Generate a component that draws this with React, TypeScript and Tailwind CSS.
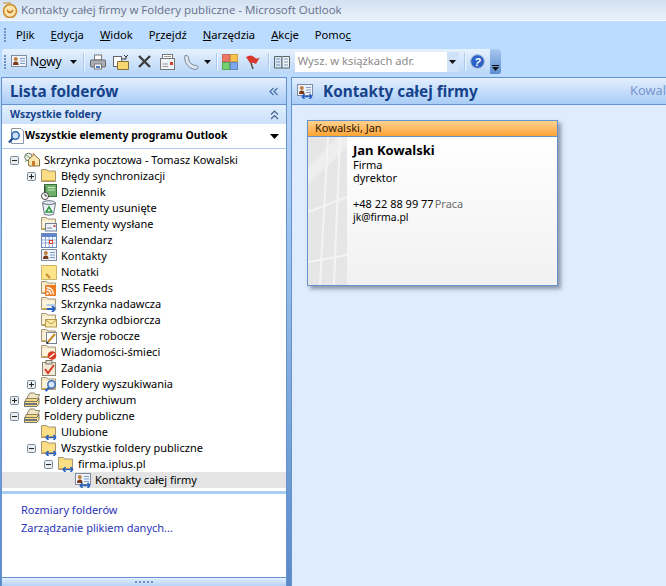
import React from "react";

const F = ({ children, badge }: { children?: React.ReactNode; badge?: boolean }) => (
  <svg width="16" height="16" viewBox="0 0 16 16" className="block shrink-0">
    <path d="M0.5 13.5V1.5H5.5L7 3H14.5V13.5Z" fill={badge ? "#f3e6c4" : "#f7d978"} stroke="#a5977a" />
    <path d="M1.5 4.5H13.5V12.5H1.5Z" fill={badge ? "#fbf3dc" : "#fbdf86"} />
    <path d="M1.5 12.5H13.5" stroke="#d9a83c" />
    {children}
  </svg>
);
const Arrows = () => (
  <path d="M5 13.5H15M5 13.5L7.5 11M5 13.5L7.5 16M15 13.5L12.5 11M15 13.5L12.5 16" stroke="#2a62c0" strokeWidth="1.6" fill="none" />
);
const Contact = ({ arrows }: { arrows?: boolean }) => (
  <svg width="16" height="16" viewBox="0 0 16 16" className="block shrink-0">
    <rect x="0.5" y="1.5" width="15" height="11" fill="#eef3fa" stroke="#7d8ba3" />
    <circle cx="4.8" cy="5" r="2" fill="#c08040" />
    <path d="M2 11C2 8 3.5 7.5 4.8 7.5S7.5 8 7.5 11Z" fill="#7a3a1a" />
    <path d="M9 4.5H14M9 7H14M9 9.5H14" stroke="#7f9cc8" />
    {arrows && <Arrows />}
  </svg>
);
const Store = () => (
  <svg width="16" height="16" viewBox="0 0 16 16" className="block shrink-0">
    <path d="M4 3.5L6 1H10.5L11.5 2.5H15.5L14 7H3Z" fill="#f1e4bf" stroke="#8a8570" />
    <path d="M2 6.5H14.5L13 10.5H1Z" fill="#f5d97c" stroke="#8a8570" />
    <path d="M0.5 9.5H13L15 6.5V11.5L13 14.5H0.5Z" fill="#f8dd82" stroke="#77756a" />
    <path d="M1 12H13" stroke="#6d7380" strokeWidth="2" />
  </svg>
);

const Ico = ({ k }: { k: string }) => {
  switch (k) {
    case "home":
      return (
        <svg width="16" height="16" viewBox="0 0 16 16" className="block shrink-0">
          <circle cx="4.5" cy="5" r="3.8" fill="#f0f0e8" stroke="#6f7a6a" />
          <path d="M2 3L6 6M3 8L1 10" stroke="#5d9a4c" />
          <path d="M4.5 12V7.5L10 2.5L15.5 7.5V14H5Z" fill="#fbe8b0" stroke="#85703d" />
          <path d="M9 2.5L10 1.5" stroke="#d07030" strokeWidth="2" />
          <rect x="8" y="9" width="3" height="5" fill="#c87b2a" />
        </svg>
      );
    case "folder":
      return <F />;
    case "journal":
      return (
        <svg width="16" height="16" viewBox="0 0 16 16" className="block shrink-0">
          <rect x="3.5" y="0.5" width="12" height="12" fill="#6fb06a" stroke="#3c6e3c" />
          <path d="M7 3.5H14M7 6H14" stroke="#cfe8c8" />
          <path d="M4 2V9" stroke="#203020" />
          <circle cx="4" cy="12" r="3.5" fill="#fff" stroke="#444" />
          <path d="M4 10V12H6" stroke="#333" fill="none" />
        </svg>
      );
    case "trash":
      return (
        <svg width="16" height="16" viewBox="0 0 16 16" className="block shrink-0">
          <ellipse cx="8" cy="3" rx="6.5" ry="2.3" fill="#dfe6ec" stroke="#6a7885" />
          <path d="M1.5 3.5L3.5 14.5Q8 16 12.5 14.5L14.5 3.5Q8 6 1.5 3.5Z" fill="#eef2f6" stroke="#6a7885" />
          <path d="M8 7L11 12H5Z" fill="none" stroke="#2d9a3c" strokeWidth="1.5" />
        </svg>
      );
    case "sent":
      return (
        <F badge>
          <rect x="4.5" y="7.5" width="11" height="7.5" fill="#eef3fa" stroke="#6f7f98" />
          <path d="M6 12H11" stroke="#6f7f98" />
          <rect x="12.5" y="9" width="2" height="2" fill="#d05030" />
        </F>
      );
    case "cal":
      return (
        <svg width="16" height="16" viewBox="0 0 16 16" className="block shrink-0">
          <rect x="0.5" y="1.5" width="15" height="14" fill="#fff" stroke="#6d87b5" />
          <rect x="1" y="2" width="14" height="3" fill="#5f86cc" />
          <path d="M1 8H15M1 11H15M4.5 5V15M8 5V15M11.5 5V15" stroke="#8da8d8" />
          <rect x="8.5" y="8.5" width="3" height="3" fill="#fff" stroke="#d8402a" />
        </svg>
      );
    case "contact":
      return <Contact />;
    case "note":
      return (
        <svg width="16" height="16" viewBox="0 0 16 16" className="block shrink-0">
          <path d="M0.5 1.5H15.5V15.5H0.5Z" fill="#fbe48a" stroke="#c9b468" />
          <path d="M5 10L9 14" stroke="#c88a30" strokeWidth="2" />
        </svg>
      );
    case "rss":
      return (
        <F badge>
          <rect x="4" y="5" width="11" height="11" rx="1" fill="#ee7a22" />
          <circle cx="6.5" cy="13.5" r="1.2" fill="#fff" />
          <path d="M5.5 10Q9.5 10 10 14.5M5.5 7.5Q12 7.5 12.5 14.5" stroke="#fff" strokeWidth="1.3" fill="none" />
        </F>
      );
    case "out":
      return (
        <F badge>
          <path d="M6 13H14M14 13L11 10M14 13L11 16" stroke="#2a62c0" strokeWidth="2" fill="none" />
          <rect x="5.5" y="8" width="9" height="2" fill="#b8cdea" />
        </F>
      );
    case "in":
      return (
        <F badge>
          <rect x="4.5" y="7.5" width="11" height="7.5" fill="#fbe9a8" stroke="#b39a50" />
          <path d="M4.5 8L10 12L15.5 8" stroke="#b39a50" fill="none" />
        </F>
      );
    case "draft":
      return (
        <F badge>
          <rect x="5.5" y="4.5" width="10" height="11" fill="#fff" stroke="#7a8596" />
          <path d="M7 14L14 6" stroke="#c58a2a" strokeWidth="2" />
          <path d="M7 14L6 15.5" stroke="#222" strokeWidth="1.5" />
        </F>
      );
    case "junk":
      return (
        <F badge>
          <circle cx="11" cy="11.5" r="4.3" fill="#d83a20" />
          <path d="M8.5 13.5L13.5 9.5" stroke="#fff" strokeWidth="1.5" />
        </F>
      );
    case "task":
      return (
        <svg width="16" height="16" viewBox="0 0 16 16" className="block shrink-0">
          <rect x="1.5" y="2.5" width="13" height="13" fill="#f2ead6" stroke="#8a8672" />
          <rect x="5" y="0.5" width="6" height="3.5" fill="#dcdcd0" stroke="#7a7a6a" />
          <path d="M4 9L7 13L13 5" stroke="#d83a28" strokeWidth="2" fill="none" />
        </svg>
      );
    case "search":
      return (
        <F badge>
          <circle cx="10.5" cy="8.5" r="3.7" fill="#d6e6f8" stroke="#3a70b8" strokeWidth="1.5" />
          <path d="M8 11.5L4.5 15" stroke="#2a62c0" strokeWidth="2.2" />
        </F>
      );
    case "store":
      return <Store />;
    case "pub":
      return (
        <F>
          <Arrows />
        </F>
      );
    case "contactA":
      return <Contact arrows />;
    default:
      return null;
  }
};

const Exp = ({ open }: { open?: boolean }) => (
  <svg width="9" height="9" viewBox="0 0 9 9" className="block">
    <rect x="0.5" y="0.5" width="8" height="8" rx="1" fill="#e9edf0" stroke="#7b8a9e" />
    <path d="M2 4.5H7" stroke="#222" />
    {!open && <path d="M4.5 2V7" stroke="#222" />}
  </svg>
);

const rows: { d: string; e?: "o" | "c"; i: string; t: string; sel?: boolean }[] = [
  { d: "pl-[8px]", e: "o", i: "home", t: "Skrzynka pocztowa - Tomasz Kowalski" },
  { d: "pl-[25px]", e: "c", i: "folder", t: "Błędy synchronizacji" },
  { d: "pl-[25px]", i: "journal", t: "Dziennik" },
  { d: "pl-[25px]", i: "trash", t: "Elementy usunięte" },
  { d: "pl-[25px]", i: "sent", t: "Elementy wysłane" },
  { d: "pl-[25px]", i: "cal", t: "Kalendarz" },
  { d: "pl-[25px]", i: "contact", t: "Kontakty" },
  { d: "pl-[25px]", i: "note", t: "Notatki" },
  { d: "pl-[25px]", i: "rss", t: "RSS Feeds" },
  { d: "pl-[25px]", i: "out", t: "Skrzynka nadawcza" },
  { d: "pl-[25px]", i: "in", t: "Skrzynka odbiorcza" },
  { d: "pl-[25px]", i: "draft", t: "Wersje robocze" },
  { d: "pl-[25px]", i: "junk", t: "Wiadomości-śmieci" },
  { d: "pl-[25px]", i: "task", t: "Zadania" },
  { d: "pl-[25px]", e: "c", i: "search", t: "Foldery wyszukiwania" },
  { d: "pl-[8px]", e: "c", i: "store", t: "Foldery archiwum" },
  { d: "pl-[8px]", e: "o", i: "store", t: "Foldery publiczne" },
  { d: "pl-[25px]", i: "pub", t: "Ulubione" },
  { d: "pl-[25px]", e: "o", i: "pub", t: "Wszystkie foldery publiczne" },
  { d: "pl-[42px]", e: "o", i: "pub", t: "firma.iplus.pl" },
  { d: "pl-[59px]", i: "contactA", t: "Kontakty całej firmy", sel: true },
];

const U = ({ children }: { children: React.ReactNode }) => <span className="underline underline-offset-1">{children}</span>;
const Sep = () => <div className="w-px h-[18px] bg-[#a9c9ee] border-r border-[#f0f6ff] box-content shrink-0" />;
const Caret = ({ cls = "" }: { cls?: string }) => (
  <svg width="7" height="4" viewBox="0 0 7 4" className={`block shrink-0 ${cls}`}>
    <path d="M0 0H7L3.5 4Z" fill="#111" />
  </svg>
);
const Grip = ({ cls }: { cls: string }) => (
  <div className={`flex flex-col gap-px ${cls}`}>
    {[0, 1, 2, 3, 4].map((i) => (
      <div key={i} className="w-[2px] h-[2px] bg-[#6b93c8]" />
    ))}
  </div>
);

export default function App() {
  return (
    <div className="w-[666px] h-[586px] overflow-hidden flex flex-col bg-[#bcdcff] text-black text-[11.5px]" style={{ fontFamily: '"Noto Sans", sans-serif' }}>
      {/* title */}
      <div className="h-[20px] shrink-0 flex items-center bg-gradient-to-b from-[#d3e1f1] to-[#e8f1fa] border-b border-[#f4f9ff] box-content">
        <svg width="16" height="16" viewBox="0 0 16 16" className="ml-[2px] shrink-0">
          <circle cx="8" cy="9" r="6.5" fill="#fbe6ae" stroke="#cf8a2a" strokeWidth="1.5" />
          <path d="M5 8Q8 13 11 8" stroke="#c9761c" strokeWidth="1.5" fill="none" />
          <path d="M1 1H9" stroke="#cf8a2a" />
        </svg>
        <span className="ml-[3px] text-[11.5px] text-[#66708c] whitespace-nowrap" style={{ fontFamily: '"Open Sans", sans-serif' }}>
          Kontakty całej firmy w Foldery publiczne - Microsoft Outlook
        </span>
      </div>
      {/* menu */}
      <div className="h-[28px] shrink-0 flex items-center pl-[4px] text-[11.2px] gap-[16px]">
        <Grip cls="-mr-[6px]" />
        <span>P<U>l</U>ik</span>
        <span><U>E</U>dycja</span>
        <span><U>W</U>idok</span>
        <span>P<U>r</U>zejdź</span>
        <span><U>N</U>arzędzia</span>
        <span><U>A</U>kcje</span>
        <span>Pomo<U>c</U></span>
      </div>
      {/* toolbar */}
      <div className="h-[25px] shrink-0 w-[499px] ml-[2px] flex items-center rounded-[3px] bg-gradient-to-b from-[#e6f1fd] to-[#b9d7f8] relative pl-[2px]">
        <Grip cls="mr-[5px]" />
        <Contact />
        <span className="ml-[3px] text-[12px]">N<U>o</U>wy</span>
        <Caret cls="ml-[8px] mr-[6px]" />
        <Sep />
        <div className="ml-[5px] flex items-center gap-[7px] shrink-0">
          <svg width="16" height="16" viewBox="0 0 16 16" className="block">
            <rect x="4.5" y="1" width="7" height="5" fill="#fff" stroke="#777" />
            <rect x="0.5" y="6" width="15" height="7" rx="1" fill="#a9adb4" stroke="#666" />
            <rect x="4.5" y="10" width="7" height="5" fill="#fff" stroke="#777" />
            <rect x="6" y="12" width="4" height="2" fill="#4a78c4" />
          </svg>
          <svg width="17" height="16" viewBox="0 0 17 16" className="block">
            <rect x="0.5" y="2.5" width="8" height="10" fill="#fff" stroke="#666" />
            <path d="M4.5 7.5H15.5V15.5H4.5Z" fill="#f5d66f" stroke="#85703d" />
            <path d="M9 5L13 5V2M11 1L13 3L15 1" stroke="#333" fill="none" />
          </svg>
          <svg width="15" height="15" viewBox="0 0 15 15" className="block">
            <path d="M2 2L13 13M13 2L2 13" stroke="#3f3f3f" strokeWidth="2.4" />
          </svg>
          <svg width="17" height="16" viewBox="0 0 17 16" className="block">
            <rect x="3.5" y="0.5" width="10" height="6" fill="#fff" stroke="#777" />
            <path d="M5 2.5H12M5 4.5H12" stroke="#999" />
            <rect x="1.5" y="4.5" width="14" height="11" fill="#eef3fa" stroke="#777" />
            <path d="M3.5 10H9M3.5 12.5H9" stroke="#999" />
            <rect x="11" y="8" width="3" height="3" fill="#d23f2a" />
          </svg>
          <svg width="16" height="16" viewBox="0 0 16 16" className="block">
            <path d="M2 1.5Q5 1 5.5 3T6 7Q8 11 12 11.5Q14 11 15 12.5T13 15.5Q6 15 2.5 8.5Q1 4 2 1.5Z" fill="#dde6ee" stroke="#7c8a9a" />
          </svg>
        </div>
        <Caret cls="ml-[5px] mr-[5px]" />
        <Sep />
        <svg width="16" height="16" viewBox="0 0 16 16" className="block ml-[4px] shrink-0">
          <rect x="0.5" y="0.5" width="7" height="7" fill="#ee7766" stroke="#c86a5a" />
          <rect x="8.5" y="0.5" width="7" height="7" fill="#f7c350" stroke="#d0a040" />
          <rect x="0.5" y="8.5" width="7" height="7" fill="#74cf6e" stroke="#58a858" />
          <rect x="8.5" y="8.5" width="7" height="7" fill="#7ca8ea" stroke="#6088c8" />
        </svg>
        <svg width="16" height="16" viewBox="0 0 16 16" className="block ml-[7px] shrink-0">
          <path d="M8 15L4 3" stroke="#55433a" strokeWidth="1.4" />
          <path d="M1 3Q6 0 9 3T15 3L11 10Q8 8 5 9Z" fill="#d8392a" />
        </svg>
        <div className="ml-[7px]"><Sep /></div>
        <svg width="16" height="15" viewBox="0 0 16 15" className="block ml-[4px] shrink-0">
          <path d="M0.5 2.5H7.5L8 3.5V14H0.5Z" fill="#d7e5f6" stroke="#566" />
          <path d="M8 3.5L8.5 2.5H15.5V14H8Z" fill="#eef3fa" stroke="#566" />
          <path d="M2 5H6M2 8H6M2 11H6M10 5H14M10 8H14M10 11H14" stroke="#7d93b5" />
        </svg>
        <div className="ml-[5px] w-[164px] h-[20px] bg-white flex items-center justify-between shrink-0">
          <span className="pl-[3px] text-[#8b8b8b] text-[11.2px] whitespace-nowrap">Wysz. w książkach adr.</span>
          <div className="w-[12px] h-full bg-[#cfe2f8] flex items-center justify-center">
            <Caret />
          </div>
        </div>
        <div className="ml-[5px]"><Sep /></div>
        <svg width="15" height="15" viewBox="0 0 15 15" className="block ml-[4px] shrink-0">
          <circle cx="7.5" cy="7.5" r="6.8" fill="#2b62c8" stroke="#9cb2d2" />
          <text x="7.5" y="11.5" textAnchor="middle" fontSize="11" fontWeight="700" fontStyle="italic" fill="#fff" fontFamily="Liberation Sans">?</text>
        </svg>
        <div className="absolute right-0 top-0 bottom-0 w-[11px] rounded-r-[3px] bg-gradient-to-b from-[#a8c9f0] to-[#5c8cd0] flex flex-col items-center justify-end pb-[3px] gap-px">
          <div className="w-[7px] h-px bg-black" />
          <Caret />
        </div>
      </div>
      {/* main */}
      <div className="flex-1 min-h-0 flex mt-[3px] bg-gradient-to-b from-[#bcdcff] to-[#5a8ac6]">
        {/* left */}
        <div className="ml-[1px] w-[286px] shrink-0 flex flex-col border border-[#6593cf] border-b-0 bg-white">
          <div className="h-[27px] shrink-0 flex items-center justify-between bg-gradient-to-b from-[#e3effe] to-[#a9cdf6] border-b border-[#6593cf] pl-[8px] pr-[7px]">
            <span className="text-[15.3px] font-bold text-[#15428b] pt-[1px]">Lista folderów</span>
            <svg width="10" height="9" viewBox="0 0 10 9" className="block">
              <path d="M4.5 1L1 4.5L4.5 8M8.5 1L5 4.5L8.5 8" stroke="#4a6fa5" fill="none" strokeWidth="1.2" />
            </svg>
          </div>
          <div className="h-[19px] shrink-0 flex items-center justify-between bg-gradient-to-b from-[#e2effe] to-[#cbe0fa] pl-[8px] pr-[7px]">
            <span className="text-[10.4px] font-bold text-[#15428b]">Wszystkie foldery</span>
            <svg width="9" height="10" viewBox="0 0 9 10" className="block">
              <path d="M1 4.5L4.5 1L8 4.5M1 9L4.5 5.5L8 9" stroke="#44618f" fill="none" strokeWidth="1.2" />
            </svg>
          </div>
          <div className="h-[25px] shrink-0 flex items-center bg-white border-b border-[#a9c8ef] pl-[6px] pr-[7px]">
            <svg width="16" height="16" viewBox="0 0 16 16" className="block shrink-0">
              <path d="M3.5 0.5H13L15.5 3V15.5H3.5Z" fill="#fff" stroke="#8a96a8" />
              <circle cx="7.5" cy="7.5" r="3.7" fill="#cfe2f8" stroke="#2f66b0" strokeWidth="1.5" />
              <path d="M4.5 10.5L1 14.5" stroke="#1f4f98" strokeWidth="2.2" />
            </svg>
            <span className="ml-[1px] flex-1 text-[10.4px] font-bold whitespace-nowrap">Wszystkie elementy programu Outlook</span>
            <svg width="9" height="5" viewBox="0 0 9 5" className="block">
              <path d="M0 0H9L4.5 5Z" fill="#000" />
            </svg>
          </div>
          <div className="h-[342px] shrink-0 pt-[3px]">
            {rows.map((r) => (
              <div key={r.t} className={`h-[16px] flex items-center whitespace-nowrap ${r.d} ${r.sel ? "bg-[#e4e4e4]" : ""}`}>
                <div className="w-[14px] shrink-0">{r.e && <Exp open={r.e === "o"} />}</div>
                <Ico k={r.i} />
                <span className="ml-[4px] text-[11px]">{r.t}</span>
              </div>
            ))}
          </div>
          <div className="h-[3px] shrink-0 bg-[#a9cdf6]" />
          <div className="flex-1 min-h-0 pl-[19px] pt-[8px] flex flex-col gap-[2px] text-[#2b35b8] text-[11px]">
            <span className="h-[16px]">Rozmiary folderów</span>
            <span className="h-[16px]">Zarządzanie plikiem danych...</span>
          </div>
          <div className="h-[9px] shrink-0 flex items-center justify-center gap-[2px] bg-gradient-to-b from-[#e3effe] to-[#b5d3f6] border-t border-[#6593cf]">
            {[0, 1, 2, 3, 4].map((i) => (
              <div key={i} className="w-[2px] h-[2px] bg-[#6b93c8]" />
            ))}
          </div>
        </div>
        {/* right */}
        <div className="ml-[4px] flex-1 min-w-0 flex flex-col bg-[#dfecfe] border-l border-[#6593cf]">
          <div className="h-[28px] shrink-0 flex items-center bg-gradient-to-b from-[#e3effe] to-[#a9cdf6] border-y border-[#6593cf] pl-[5px]">
            <Contact arrows />
            <span className="ml-[10px] text-[15.3px] font-bold text-[#15428b] whitespace-nowrap pt-[1px]">Kontakty całej firmy</span>
            <span className="ml-auto text-[12.8px] text-[#7a96cf] whitespace-nowrap">Kowal</span>
          </div>
          <div className="ml-[15px] mt-[15px] w-[251px] h-[166px] flex flex-col border border-[#6593cf] shadow-[3px_3px_4px_rgba(70,80,100,0.55)]">
            <div className="h-[16px] shrink-0 flex items-center pl-[7px] bg-gradient-to-b from-[#ffd28e] to-[#fea42f] border-b border-[#6593cf] text-[11px] text-[#301800]">
              Kowalski, Jan
            </div>
            <div className="flex-1 flex bg-gradient-to-b from-white to-[#f1f1f1]">
              <div className="w-[39px] shrink-0 bg-[#e6e6e6]">
                <svg width="39" height="148" viewBox="0 0 39 148" className="block">
                  <path d="M0 30L30 0H39V10L0 48Z" fill="#eeeeee" />
                  <path d="M20 0L12 148M32 0L26 148M0 75L39 60M0 125L39 118" stroke="#f4f4f4" strokeWidth="2" fill="none" />
                </svg>
              </div>
              <div className="pl-[6px] pt-[5px] text-[11px] leading-[13px] flex flex-col">
                <span className="text-[13px] leading-[16px] font-bold">Jan Kowalski</span>
                <span className="h-[13px]">Firma</span>
                <span className="h-[13px]">dyrektor</span>
                <span className="h-[13px]" />
                <span className="h-[13px] whitespace-nowrap">+48 22 88 99 77<span className="ml-[1px] text-[#6d6d6d]">Praca</span></span>
                <span className="h-[13px] text-[10.4px] mt-px">jk@firma.pl</span>
              </div>
            </div>
          </div>
        </div>
      </div>
    </div>
  );
}
